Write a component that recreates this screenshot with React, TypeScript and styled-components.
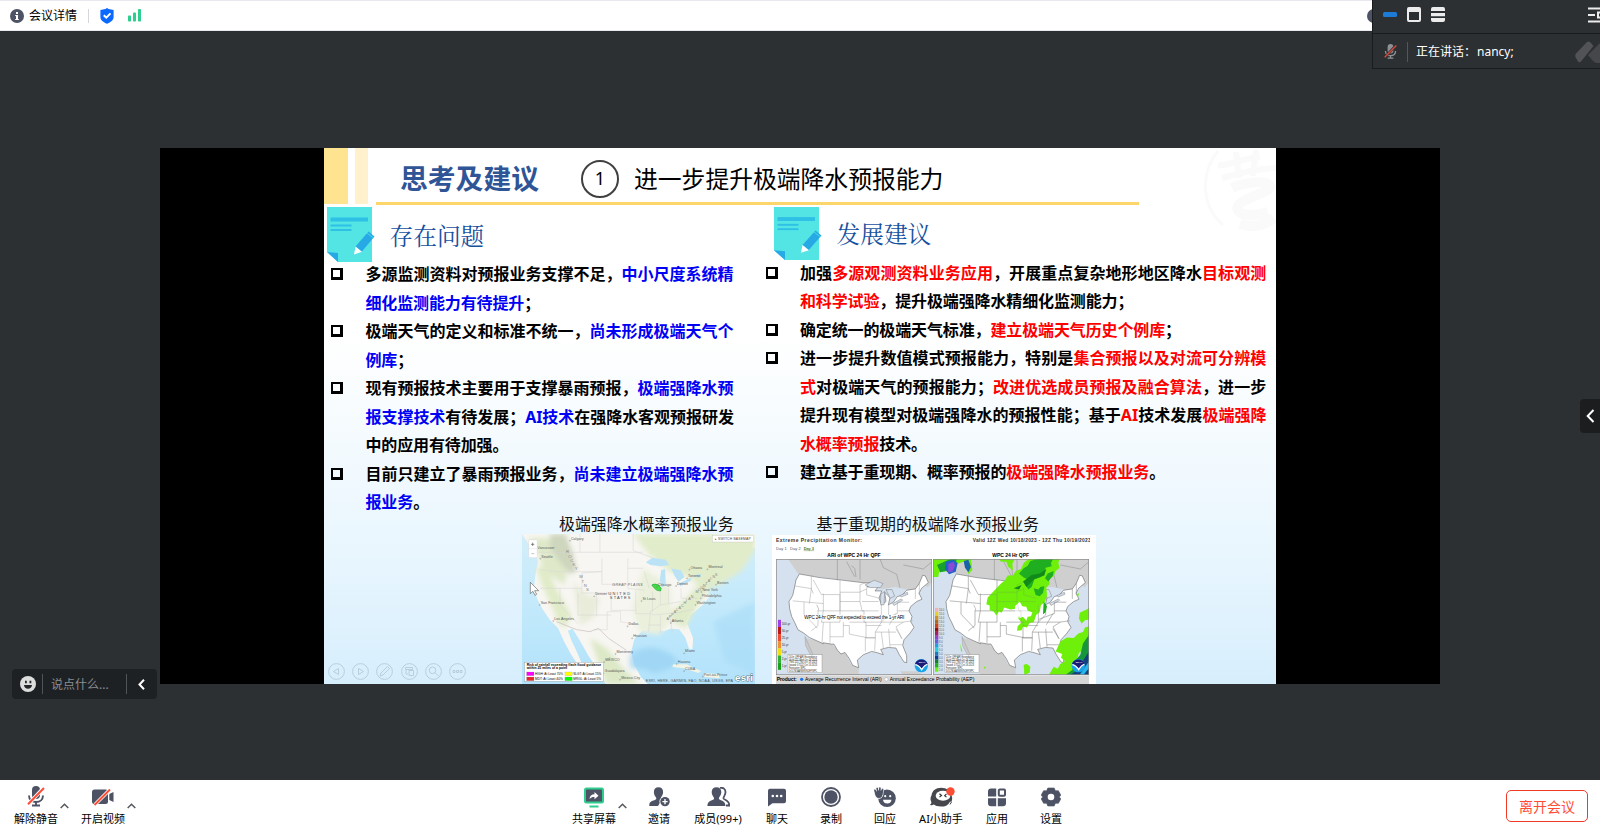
import React from 'react';
import styled, { createGlobalStyle } from 'styled-components';

const GlobalStyle = createGlobalStyle`
  * { box-sizing: border-box; }
  html, body { margin: 0; padding: 0; overflow: hidden; }
  body { font-family: "Noto Sans", "Noto Sans CJK SC", sans-serif; color: #000; }
  svg { display: block; flex: none; }
  svg text { font-family: "Liberation Sans", sans-serif; }
`;

const INK = '#4d5364';
const RED = '#ff4d35';

/* ---------- window frame ---------- */

const Window = styled.div`
  position: relative;
  width: 1600px;
  height: 832px;
  display: flex;
  flex-direction: column;
  background: #2d3033;
`;

const TopBar = styled.header`
  height: 31px;
  flex: none;
  display: flex;
  align-items: center;
  background: #fff;
  border-top: 1px solid #e8e9f0;
  border-bottom: 1px solid #e8e9f0;
  padding: 0 0 0 10px;
`;

const TopLabel = styled.span`
  font-size: 12px;
  line-height: 16px;
  margin-left: 5px;
  width: 48px;
  white-space: nowrap;
`;

const TopDivider = styled.i`
  width: 1px;
  height: 14px;
  background: #d4d6dc;
  margin: 0 11px 0 11px;
`;

const SignalSlot = styled.span`
  margin-left: 14px;
`;

const HiddenInfo = styled.span`
  margin-left: auto;
  margin-right: 219px;
`;

const Stage = styled.main`
  flex: 1;
  padding: 117px 160px 0;
`;

const Screen = styled.section`
  width: 1280px;
  height: 536px;
  background: #000;
  padding-left: 164px;
`;

/* ---------- floating speaker panel ---------- */

const SpeakerPanel = styled.aside`
  position: absolute;
  top: 0;
  right: 0;
  width: 228px;
  height: 69px;
  background: #2d3033;
  border-left: 1px solid #1a1b1d;
  border-bottom: 1px solid #1a1b1d;
  overflow: hidden;
`;

const PanelTools = styled.div`
  height: 34px;
  display: flex;
  align-items: center;
  gap: 10px;
  padding: 0 0 4px 10px;
  border-bottom: 1px solid #1a1b1d;
`;

const PanelMenu = styled.span`
  margin-left: auto;
`;

const PanelStatus = styled.div`
  height: 34px;
  display: flex;
  align-items: center;
  color: #fff;
  font-size: 12px;
  line-height: 16px;
  padding: 2px 0 0 11px;
`;

const PanelDivider = styled.i`
  width: 1px;
  height: 20px;
  background: #53565a;
  margin: 0 8px 0 10px;
`;

const SpeakerLabel = styled.span`
  width: 61px;
  white-space: nowrap;
`;

const SpeakerName = styled.span`
  font-size: 12px;
`;

const PanelLogo = styled.span`
  margin-left: auto;
`;

/* ---------- slide ---------- */

const Slide = styled.article`
  position: relative;
  width: 952px;
  height: 536px;
  overflow: hidden;
  display: flex;
  flex-direction: column;
  background: linear-gradient(#fff 0, #fff 35%, #f3fafe 56%, #e9f6fe 75%, #d7eefd 100%);
`;

const SlideHead = styled.div`
  height: 59px;
  flex: none;
  display: flex;
`;

const Stripe = styled.i<{ $w: number; $c: string; $gap: number }>`
  width: ${p => p.$w}px;
  height: 56px;
  background: ${p => p.$c};
  margin-right: ${p => p.$gap}px;
`;

const TitleArea = styled.div`
  width: 763px;
  height: 57px;
  display: flex;
  align-items: center;
  border-bottom: 3px solid #fdd66b;
  padding: 8px 0 0 24px;
  white-space: nowrap;
`;

const Title = styled.h1`
  margin: -2px 0 0;
  width: 181px;
  font-size: 27.8px;
  line-height: 36px;
  font-weight: 700;
  color: #2f5597;
`;

const Num = styled.span`
  width: 38px;
  height: 38px;
  border: 2px solid #404040;
  border-radius: 50%;
  font-size: 18px;
  line-height: 33px;
  text-align: center;
  margin-right: 15px;
`;

const Subtitle = styled.span`
  font-size: 23.8px;
  line-height: 32px;
`;

const Seal = styled.span`
  position: absolute;
  right: 0;
  top: 0;
`;

const Columns = styled.div`
  height: 308px;
  flex: none;
  display: flex;
`;

const Column = styled.section<{ $w: number }>`
  width: ${p => p.$w}px;
`;

const SectionHead = styled.div<{ $left: number; $h: number }>`
  display: flex;
  align-items: flex-start;
  height: ${p => p.$h}px;
  padding-left: ${p => p.$left}px;
  gap: 13.5px;
`;

const SectionTitle = styled.h2<{ $top: number }>`
  margin: ${p => p.$top}px 0 0;
  font-family: "Noto Serif CJK SC", "Noto Sans CJK SC", serif;
  font-weight: 400;
  font-size: 23.7px;
  line-height: 30px;
  color: #16519f;
`;

const List = styled.ul<{ $left: number; $gap: number }>`
  list-style: none;
  margin: 0;
  padding: 0 0 0 ${p => p.$left}px;
  li { display: flex; gap: ${p => p.$gap}px; }
`;

const Bullet = styled.i`
  width: 12px;
  height: 12px;
  border: solid #000;
  border-width: 2px 3px 3px 2px;
  margin-top: 8px;
  flex: none;
`;

const Lines = styled.p`
  margin: 0;
  font-size: 16px;
  line-height: 28.55px;
  font-weight: 700;
  white-space: nowrap;
`;

const Line = styled.span<{ $ls: number }>`
  display: block;
  letter-spacing: ${p => p.$ls}px;
`;

const Mark = styled.span<{ $c?: string }>`
  color: ${p => p.$c || '#000'};
`;

const Figures = styled.div`
  height: 169px;
  display: flex;
  align-items: flex-end;
`;

const Controls = styled.div`
  width: 198px;
  display: flex;
  gap: 7.4px;
  padding: 0 0 4px 3.5px;
`;

const Figure = styled.figure<{ $w: number; $gap: number }>`
  margin: 0 ${p => p.$gap}px 0 0;
  width: ${p => p.$w}px;
  height: 169px;
  display: flex;
  flex-direction: column;
  justify-content: flex-end;
`;

const Caption = styled.figcaption<{ $left: number }>`
  height: 20px;
  padding-left: ${p => p.$left}px;
  font-size: 15.9px;
  line-height: 18px;
  white-space: nowrap;
  color: #111;
`;

/* ---------- chat box and side handle ---------- */

const ChatBox = styled.div`
  position: absolute;
  left: 12px;
  top: 669px;
  width: 145px;
  height: 30px;
  border-radius: 4px;
  background: #1e2124;
  display: flex;
  align-items: center;
  padding-left: 8px;
  font-size: 12px;
  color: #8b8d90;
`;

const ChatText = styled.span`
  width: 75px;
  line-height: 16px;
  padding-top: 1px;
  white-space: nowrap;
`;

const ChatDivider = styled.i<{ $l: number; $r: number }>`
  width: 1px;
  height: 20px;
  background: #505357;
  margin: 0 ${p => p.$r}px 0 ${p => p.$l}px;
`;

const SideHandle = styled.div`
  position: absolute;
  right: 0;
  top: 399px;
  width: 20px;
  height: 34px;
  border-radius: 4px 0 0 4px;
  background: #1c1d1f;
  display: flex;
  align-items: center;
  padding-left: 5.5px;
`;

/* ---------- bottom toolbar ---------- */

const Toolbar = styled.footer`
  height: 52px;
  flex: none;
  background: #fff;
  display: flex;
  padding-left: 14px;
`;

const ToolGroup = styled.div<{ $w?: number }>`
  display: flex;
  width: ${p => (p.$w ? p.$w + 'px' : 'auto')};
`;

const Tool = styled.div<{ $w: number }>`
  width: ${p => p.$w}px;
  display: flex;
  flex-direction: column;
  align-items: center;
  padding-top: 5px;
  font-size: 11px;
  line-height: 16px;
  white-space: nowrap;
`;

const ToolIcon = styled.span`
  height: 24px;
  margin-bottom: 2px;
  display: flex;
  align-items: center;
`;

const Caret = styled.span<{ $r: number }>`
  width: 12px;
  margin-right: ${p => p.$r}px;
  padding: 22.5px 0 0 2px;
`;

const Leave = styled.button`
  margin: 10px 12px 0 auto;
  width: 82px;
  height: 32px;
  padding: 0;
  border: 1px solid #f03a28;
  border-radius: 5px;
  background: #fff;
  color: ${RED};
  font: 14px/28px "Noto Sans CJK SC", sans-serif;
`;

/* ---------- icons ---------- */

const Info = () => (
  <svg width="14" height="14" viewBox="0 0 14 14">
    <circle cx="7" cy="7" r="7" fill={INK} />
    <path d="M6 3h2v2H6zM5.2 6H8v4h.8v1H5.2v-1H6V7h-.8z" fill="#fff" />
  </svg>
);

const Shield = () => (
  <svg width="14" height="16" viewBox="0 0 14 16">
    <path d="M7 0l1.600 1 5 .9v7.200c0 3.300-3 5.300-6.600 6.700C3.400 14.400.4 12.400.4 9.100V1.900l5-.9z" fill="#0b69ff" />
    <path d="M3.800 7.200l2.500 2.500 4.200-4.300" fill="none" stroke="#fff" strokeWidth="2" />
  </svg>
);

const Signal = () => (
  <svg width="13" height="13" viewBox="0 0 13 13" fill="#2ccf8e">
    <rect x="0" y="6.500" width="3" height="6" rx=".8" />
    <rect x="5" y="3.500" width="3" height="9" rx=".8" />
    <rect x="10" y="0" width="3" height="12.500" rx=".8" />
  </svg>
);

const Mic = ({ s = 18, body = INK, gap = '#fff', slash = RED }) => (
  <svg width={s} height={s * 1.17} viewBox="0 0 18 21">
    <rect x="5" y="0" width="8" height="13" rx="4" fill={body} />
    <path d="M2 9.500c0 4 3 6.500 7 6.500s7-2.500 7-6.500" fill="none" stroke={body} strokeWidth="1.900" />
    <path d="M9 16v3M5 19.500h8" stroke={body} strokeWidth="1.900" />
    <path d="M1.500 18L16.500 2" stroke={gap} strokeWidth="3.600" />
    <path d="M1 18.300L17 2" stroke={slash} strokeWidth="2" />
  </svg>
);

const Camera = () => (
  <svg width="22" height="18" viewBox="0 0 22 18">
    <rect x="0" y="1.500" width="16" height="14.500" rx="2.500" fill={INK} />
    <path d="M17.300 6l4.200-2v10l-4.200-2z" fill={INK} />
    <path d="M3 16.500L18 1.500" stroke="#fff" strokeWidth="3.600" />
    <path d="M2.500 17L18 1.500" stroke={RED} strokeWidth="2" />
  </svg>
);

const Up = () => (
  <svg width="9" height="6" viewBox="0 0 9 6">
    <path d="M.7 5l3.800-3.800L8.300 5" fill="none" stroke="#55585f" strokeWidth="1.500" />
  </svg>
);

const Left = () => (
  <svg width="9" height="14" viewBox="0 0 9 14">
    <path d="M7.500 1L1.700 7l5.800 6" fill="none" stroke="#fff" strokeWidth="2" />
  </svg>
);

const Share = () => (
  <svg width="20" height="21" viewBox="0 0 20 21">
    <rect x="1" y="1.500" width="18" height="14" rx="1.500" fill={INK} stroke="#2ccf8e" strokeWidth="2" />
    <path d="M5.500 12c.3-3 2-4.600 5-4.700V5l4 3.700-4 3.500V9.900c-2.200-.1-3.600.5-5 2.100z" fill="#fff" />
    <path d="M5.500 19.500h9" stroke="#2ccf8e" strokeWidth="2" />
  </svg>
);

const Invite = () => (
  <svg width="21" height="20" viewBox="0 0 21 20">
    <path d="M9.500.3c3 0 4.600 2 4.600 4.800 0 2-.8 3.800-1.900 4.800-.6 1 .2 1.500 1.200 2L9 19H.4c-.5-2.500.6-4 2.600-5 2-1 4.400-1.400 4.400-2.600 0-1-2.500-2.500-2.500-6.300C4.900 2.300 6.500.3 9.500.3z" fill={INK} />
    <circle cx="16" cy="14.600" r="5.600" fill="#fff" />
    <circle cx="16" cy="14.600" r="4.700" fill={INK} />
    <path d="M16 12v5.200M13.400 14.600h5.200" stroke="#fff" strokeWidth="1.400" />
  </svg>
);

const Members = () => (
  <svg width="23" height="20" viewBox="0 0 23 20">
    <path d="M13 .9c3.300-.6 5.500 1.200 5.500 4.200 0 3.500-2.300 4.800-2 6.300.4 1.600 6 1.500 5.700 7.100H19" fill="none" stroke={INK} strokeWidth="1.800" />
    <path d="M9.500.3c3 0 4.800 2 4.800 4.800 0 3.700-2.400 5-2.400 6.500 0 2 6.800 1.600 6.500 7.400H.4C.2 13.200 7.100 13.600 7.100 11.600c0-1.500-2.400-2.800-2.400-6.500C4.700 2.300 6.500.3 9.500.3z" fill={INK} />
  </svg>
);

const Chat = () => (
  <svg width="18" height="19" viewBox="0 0 18 19">
    <path d="M2 .8h14a2 2 0 012 2v10.400a2 2 0 01-2 2H4.500L0 18.500V2.800a2 2 0 012-2z" fill={INK} />
    <g fill="#fff"><circle cx="4.800" cy="8" r="1.300" /><circle cx="9" cy="8" r="1.300" /><circle cx="13.200" cy="8" r="1.300" /></g>
  </svg>
);

const RecordIcon = () => (
  <svg width="20" height="20" viewBox="0 0 20 20">
    <circle cx="10" cy="10" r="9" fill="none" stroke={INK} strokeWidth="1.800" />
    <circle cx="10" cy="10" r="6.700" fill={INK} />
  </svg>
);

const Respond = () => (
  <svg width="22" height="21" viewBox="0 0 22 21">
    <circle cx="13" cy="11.300" r="8.800" fill={INK} />
    <circle cx="11.200" cy="9.200" r="1.100" fill="#fff" /><circle cx="16.200" cy="9.200" r="1.100" fill="#fff" />
    <path d="M9 12.700h8.500c-.4 2.700-2 3.800-4.200 3.800S9.300 15.400 9 12.700z" fill="#fff" />
    <path d="M.3 2.800l1.500-.6.5 2L2.300.7 4 .3l.6 3L5 0h1.700l.1 3.500L8 1.200l1.500.6-.6 5.700c-.3 2.500-1.800 4-4 4C1.500 11.500.6 8 .3 2.800z" fill={INK} stroke="#fff" strokeWidth=".8" />
    <path d="M.9 3.200l1.500 5M3.200 1.500l.8 5M5.900 1.200l-.2 5M8.600 2.400l-1 5" stroke={INK} strokeWidth="1.500" strokeLinecap="round" />
  </svg>
);

const Robot = () => (
  <svg width="27" height="21" viewBox="0 0 27 21">
    <path d="M13 .8c5.800 0 9.600 3 9.800 7 1.500 1 1.800 4 .8 7-1 .3-1.500-.4-1.500-.4-1.500 3.600-4.600 5.200-9.200 5.200-3.200 0-5.600-.7-7.200-2-1.800 1-3.600.4-3.700-.2 1.300-.6 1.500-1.500 1.300-2.500C2 12 2.500 10 3.500 8.500 4.200 3.600 8 .8 13 .8z" fill="#46474d" />
    <ellipse cx="15" cy="8.700" rx="7.300" ry="5" fill="#fff" />
    <path d="M11.500 6.800l2 1.700-2 1.600M18.500 6.800l-1.800 1.800 1.800 1.500" fill="none" stroke="#333" strokeWidth="1.200" />
    <path d="M23.500 15l-1.500 2.500" stroke="#46474d" strokeWidth="1" />
    <circle cx="22.500" cy="4.500" r="4.200" fill={RED} />
  </svg>
);

const Apps = () => (
  <svg width="18" height="19" viewBox="0 0 18 19">
    <g fill={INK}>
      <path d="M3 .5h5.200v8H0v-5a3 3 0 013-3zM0 10.300h8.200v8H3a3 3 0 01-3-3zM9.800 10.300H18v5a3 3 0 01-3 3H9.800z" />
      <rect x="10.800" y="1.500" width="6.200" height="6.200" rx="1" fill="none" stroke={INK} strokeWidth="2" />
    </g>
  </svg>
);

const Gear = () => (
  <svg width="20" height="20" viewBox="0 0 20 20">
    <path d="M6.800 1h6.400l1.200 2.800 3-.1 2.500 4.600-1.700 1.700 1.700 1.700-2.500 4.600-3-.1L13.200 19H6.800l-1.200-2.800-3 .1L.1 11.700 1.800 10 .1 8.300l2.500-4.600 3 .1z" fill={INK} stroke={INK} strokeLinejoin="round" strokeWidth=".6" />
    <circle cx="10" cy="10" r="3.300" fill="#fff" />
  </svg>
);

const Smile = () => (
  <svg width="16" height="16" viewBox="0 0 16 16">
    <circle cx="8" cy="8" r="8" fill="#dcdddd" />
    <path d="M5 4.800h1.800v2.500H5zM9.500 4.800h1.800v2.500H9.500zM4 9h8c-.3 2.500-1.700 3.700-4 3.700S4.300 11.500 4 9z" fill="#24272a" />
  </svg>
);

const NoteIcon = ({ h }: { h: number }) => (
  <svg width="49" height={h} viewBox="0 0 49 55" preserveAspectRatio="none">
    <path d="M0 0h45v55H11L0 45z" fill="#52e5e4" />
    <path d="M0 45l11 1v9z" fill="#27a9e6" />
    <rect x="3.500" y="10.500" width="37.500" height="4" fill="#2fc0e6" />
    <rect x="3.500" y="17.500" width="21" height="2" fill="#2fc0e6" />
    <rect x="3.500" y="22" width="21" height="2" fill="#2fc0e6" />
    <path d="M28.500 39.500L41.500 24.500l6 5L34.500 45z" fill="#27a9e6" />
    <path d="M40 26l6.500 5" stroke="#52e5e4" strokeWidth=".8" />
    <path d="M28.500 39.500l6.500 5.300L27 47.500z" fill="#fff" />
  </svg>
);

const SealMark = () => (
  <svg width="72" height="90" viewBox="0 0 72 90" fill="none" stroke="#fafafa">
    <path d="M14 3C-4 25-3 58 19 77" strokeWidth="3" />
    <path d="M14 17c10 2 18-6 42-8M18 30c14-3 22-8 54-10M32 4l3 26M52 2l-3 26" strokeWidth="6" />
    <path d="M28 40c12-6 36-8 38-2S38 50 34 58s12 12 30 6M36 76c12 4 24 2 34-6" strokeWidth="10" />
  </svg>
);

const controlGlyphs = [
  <path key="a" d="M10.500 5.500v6L5.500 8.500z" />,
  <path key="b" d="M6.500 5.500v6l5-3z" />,
  <path key="c" d="M4 13l1-3 6.500-6.500 2 2L7 12z" />,
  <path key="d" d="M4.500 4.500h7v2h-7zM5 7v4h2M8 7.500h4.500v5H8z" />,
  <path key="e" d="M7.500 4a3.300 3.300 0 100 6.600A3.300 3.300 0 007.500 4zM10 9.500l3.500 3.500" />,
  <path key="f" d="M4 7.500h2v2H4zM7.500 7.500h2v2h-2zM11 7.500h2v2h-2z" />,
];

/* ---------- maps ---------- */

const cities: [string, number, number][] = [
  ['Calgary', 213, 104], ['Vancouver', 112, 132], ['Seattle', 124, 158], ['San Francisco', 122, 297],
  ['Los Angeles', 163, 345], ['Denver', 286, 271], ['Dallas', 386, 361], ['Houston', 400, 397],
  ['Monterrey', 350, 444], ['St Louis', 428, 285], ['Chicago', 474, 243], ['Detroit', 532, 240],
  ['Toronto', 565, 217], ['Ottawa', 572, 191], ['Montreal', 626, 190], ['Boston', 652, 236],
  ['New York', 608, 258], ['Philadelphia', 606, 277], ['Washington', 590, 297], ['Atlanta', 516, 351],
  ['Miami', 556, 442], ['Havana', 534, 474], ['MÉXICO', 316, 468], ['Mexico City', 364, 521],
  ['CUBA', 556, 495], ['Guadalajara', 314, 502], ['Port-au-Prince', 612, 512],
];

const spacedLetters = (text: string, pts: number[][], size: number) =>
  text.split('').map((c, i) => (
    <text key={i} x={pts[0][0] + ((pts[1][0] - pts[0][0]) * i) / (text.length - 1)} y={pts[0][1] + ((pts[1][1] - pts[0][1]) * i) / (text.length - 1)} fontSize={size} fill="#858585">{c}</text>
  ));

const legend: [string, string, number, number][] = [
  ['#ff00ff', 'HIGH: At Least 70%', 80, 501], ['#ffff00', 'SLGT: At Least 15%', 195, 501],
  ['#e8252b', 'MDT: At Least 40%', 80, 516], ['#00ff00', 'MRGL: At Least 5%', 195, 516],
];

const BaseMap = () => (
  <svg width="233" height="150" viewBox="66 87 700 450" preserveAspectRatio="none">
    <defs>
      <linearGradient id="sea" x1="0" y1="0" x2="0" y2="1">
        <stop offset="0" stopColor="#d3eefa" /><stop offset=".6" stopColor="#bfe8fb" /><stop offset="1" stopColor="#b2e2fb" />
      </linearGradient>
      <filter id="soft"><feGaussianBlur stdDeviation="8" /></filter>
    </defs>
    <rect x="66" y="87" width="700" height="450" fill="url(#sea)" />
    <path d="M66 87l20 30 22 24 6 30-8 40-4 38 10 34 16 30 22 32 24 24 18 40 22 40 24 36 10-4-18-42-16-34-10-28 14-6 22 36 26 46 28 40 24 44h126l-20-20-20-36-10-40 10-40 24-24 40-8 24 10 20-8 26 2 18 24 12 34 10 2 2-34-18-44 10-24 40-34 16-20-4-30 26-36 30-26 22-18 14-10 40-26 34-10 24-30-6-20-30 14-20-4 40-30 24-26V87z" fill="#f7f6f2" />
    <g filter="url(#soft)">
      <path d="M400 87h366v50l-40 60-60 40-50 20-50-40-60-20-60-50z" fill="#e1ecca" />
      <path d="M84 100h60l50 20 10 60-10 60-60-40-22-60z" fill="#dfe9c9" />
      <path d="M150 87h46l20 50 14 60-20 10-34-40-26-40z" fill="#ced6bd" />
      <path d="M108 190l22 60 24 50 20 50 20 20 20-40-50-90-30-60z" fill="#e0ebc8" />
      <path d="M220 230l40 40 40 10-20 60-40 20z" fill="#e8ecd9" />
      <path d="M498 340l60-60 70-76 20 20-60 86-30 60z" fill="#dfebc9" />
      <path d="M430 190l80 50 8 100-40 50-60-10-20-70z" fill="#eaf0db" />
      <path d="M270 400l50 30 50 60 50 47h-100z" fill="#dce8c6" />
    </g>
    <path d="M438 172l20-14 40 6 10 16-26 4-30-4zM484 196l12-4 2 48-12 8-6-22zM514 190l30 6 10 20-18 14-12-18zM536 236l26-12 14-8-4 12-30 16zM580 212l26-6-10 12z" fill="#bce3f5" />
    <path d="M390 450q50-40 110-10t10 50-60 10-60-10z" fill="#98d2f2" opacity=".7" filter="url(#soft)" />
    <path d="M640 350l126-60v220l-90-40z" fill="#a8dcf8" opacity=".6" filter="url(#soft)" />
    <path d="M520 478l40 0 44 20-8 6-44-14-34-4zM612 504l44 4 4 12-46-4z" fill="#f2f3e4" />
    <g fill="none" stroke="#d9d5d6" strokeWidth="1.600">
      <path d="M112 142h318M218 142v58l-40 0-60-6M218 200l88 0M306 160v78M306 200l-60 4v60h90M306 238h78M120 250h126M180 250v50l54 56M234 264v66h100M290 264v70M334 264v52h74M322 320v54h-40M322 320h40v30l44 8M384 160v90l50 6M384 190h46M408 256v70h50M434 200l14 50M458 260v60M482 250v50l-30 20-6 60M506 250v44M482 300l60-10M456 330l90-8M446 360h36M482 330v56M510 330l8 54M544 250v30l50 0M544 320l40-6M240 87v55M300 87v55M400 87v50l60 22" />
      <path d="M170 350l60 24 40 6 26-10 30 30 24 16 30 20" stroke="#c3bcc0" strokeWidth="2" />
    </g>
    <path d="M456 240q8-6 20 0l8 10-2 8q-12 0-18-8z" fill="#3fe03f" stroke="#21a038" strokeWidth="2" />
    <g fill="#5a5a5a" fontSize="11">
      {cities.map(([n, x, y]) => <text key={n} x={x} y={y}>{n}</text>)}
      {cities.map(([n, x, y]) => <circle key={n} cx={x - 3} cy={y + 3} r="1.800" fill="none" stroke="#777" />)}
    </g>
    <text x="337" y="242" fontSize="11" fill="#6b6b6b" textLength="92" fontStyle="italic">GREAT PLAINS</text>
    <text x="325" y="269" fontSize="12" fill="#444" textLength="66">UNITED</text>
    <text x="330" y="283" fontSize="12" fill="#444" textLength="62">STATES</text>
    {spacedLetters('ROCKY MTNS', [[198, 145], [258, 258]], 13)}
    {spacedLetters('APPALACHIAN MOUNTAINS', [[500, 345], [646, 212]], 11)}
    <rect x="86" y="104" width="26" height="54" rx="3" fill="#fff" stroke="#c8c8c8" />
    <path d="M86 131h26" stroke="#ccc" />
    <path d="M93 118h10M98 113v10" stroke="#555" strokeWidth="2" />
    <path d="M94 146h9" stroke="#aaa" strokeWidth="2" />
    <rect x="638" y="91" width="124" height="20" fill="#fff" stroke="#bbb" />
    <text x="645" y="105" fontSize="10" fill="#444" textLength="108">▸ SWITCH BASEMAP</text>
    <rect x="74" y="472" width="237" height="57" fill="#fff" stroke="#888" />
    <text x="80" y="482" fontSize="10" fontWeight="bold" textLength="224" lengthAdjust="spacingAndGlyphs">Risk of rainfall exceeding flash flood guidance</text>
    <text x="80" y="493" fontSize="10" fontWeight="bold" textLength="122" lengthAdjust="spacingAndGlyphs">within 25 miles of a point</text>
    {legend.map(([c, t, x, y]) => (
      <g key={c}>
        <rect x={x} y={y} width="22" height="11" fill={c} stroke="#777" strokeWidth=".6" />
        <text x={x + 25} y={y + 9} fontSize="9" textLength="84" lengthAdjust="spacingAndGlyphs">{t}</text>
      </g>
    ))}
    <text x="438" y="530" fontSize="11" fill="#555" textLength="262">ESRI, HERE, GARMIN, FAO, NOAA, USGS, EPA</text>
    <text x="706" y="529" fontSize="29" fontWeight="bold" fill="#fff" stroke="#5f7f8c" strokeWidth="3" paintOrder="stroke" textLength="54">esri</text>
    <path d="M91 232l0 34 8-7 6 12 5-3-6-11h12z" fill="#fff" stroke="#444" strokeWidth="1.600" />
  </svg>
);

const US_OUTLINE = 'M118 207L108 225 103 250 98 272 87 290 89 312 95 335 105 355 114 375 130 384 148 398 190 417 190 414 214 418 222 418 232 436 243 448 255 443 268 462 278 482 296 489 292 466 310 450 335 440 352 444 370 450 362 434 385 428 408 430 418 450 432 472 440 474 440 452 428 422 432 405 450 385 462 368 452 350 456 335 447 318 452 305 470 290 486 283 477 265 485 250 505 233 496 213 488 211 478 235 466 252 440 256 425 272 412 275 400 292 385 300 390 278 374 262 378 290 365 300 357 280 365 258 345 258 355 245 320 246 342 233 315 234 250 226 180 218Z';
const STATES = 'M104 243l50 8M154 212v40l6 14M98 288l92 8M154 251l-6 45M160 225l24 44h54M190 266v52h50v-52M240 225v66M240 262h58M240 290h60M132 292v36l40 42M190 318l-16 0v44l-20 16M190 318l-6 34h56M240 318v34M240 318h72M240 290v28M210 352v62M250 352v44h-40M190 352l-4 62M250 362h18v26l50 10M318 232l-18 8v50l6 28h50M298 262l22-10M306 290h50M320 250v20l38 10M312 318v34h52M268 352h50M318 352v48h28M318 362h46M364 300v52l-18 30v16l-2 40M346 382h18l6 48M364 382h44M364 352h64M386 300v30l-22 22M412 292v34l-48 18M412 318h36M408 326l-20 34M386 372l4 54M408 372l18 30M430 352l-22 14 18 36M390 420h36M448 292l-36 0M466 252v30M478 235l0 34M428 352l30-4M346 398l-30 0v42';
const CANADA = 'M48 162h468v70l-12 14-16-6-22 20-60-14-40 6-30-14-30-6-188-24-20-46z';
const LAKES = 'M315 240l28-14 26 10-8 12-30 0zM362 268l12-8-2 40-10 0zM378 254l18 0 8 20-14 6zM398 296l26-14 4 4-26 16zM420 272l22-10 2 6-20 8z';

const WpcMap = ({ children }: { children?: React.ReactNode }) => (
  <svg width="156" height="116" viewBox="48 162 468 349" preserveAspectRatio="none">
    <rect x="48" y="162" width="468" height="349" fill="#d5e1ee" />
    <path d={CANADA} fill="#cfcfcf" />
    <path d="M84 162l30 44 8-6-20-38z" fill="#cfcfcf" />
    <path d="M134 400l80 16 18 18 26 14 14 30 20 10-4 23H190l-20-40z" fill="#cfcfcf" />
    <path d="M135 395l22 50 16 34-10-6-26-50z" fill="#c9c9c9" stroke="#888" />
    <path d="M286 510v-34l10 10 0 25zM420 500h50l20 11h-60z" fill="#cfcfcf" />
    <path d={US_OUTLINE} fill="#fff" stroke="#666" strokeWidth="1.800" strokeLinejoin="round" />
    <path d={LAKES} fill="#d5e1ee" stroke="#666" strokeWidth="1.200" />
    <path d={STATES} fill="none" stroke="#999" strokeWidth="1.400" />
    <path d="M170 300l6 12-2 6M260 170l24 45M232 162v64M300 162v62M360 162l10 26 40 20 10 40M430 180l60 12 24-20M274 182l10 8 4 26" fill="none" stroke="#888" strokeWidth="1.500" />
    {children}
    <rect x="84" y="450" width="102" height="54" fill="#fff" stroke="#777" />
    {['24-hr QPF ARI Exceedance', 'Valid 12Z Wed Oct 18 2023', 'Thru 12Z Thu Oct 19 2023', 'Issued: 0752Z Oct 16 2023', 'Forecaster: WPC', 'DOC/NOAA/NWS/NCEP/WPC'].map((t, i) => (
      <text key={t} x="87" y={459 + i * 8.5} fontSize="8" fill="#222" textLength={i === 4 ? 50 : 84} lengthAdjust="spacingAndGlyphs">{t}</text>
    ))}
    <circle cx="484" cy="483" r="20" fill="#1aa3e8" />
    <path d="M465 478a20 20 0 0138 0c-6 2-12 10-17 16-6-8-12-14-21-16z" fill="#1b1c78" />
    <path d="M466 480c8 1 14 8 19 15 5-8 9-14 17-16" fill="none" stroke="#fff" strokeWidth="4" />
    <text x="476" y="474" fontSize="7" fontWeight="bold" fill="#fff">NOAA</text>
    <rect x="49" y="163" width="466" height="347" fill="none" stroke="#888" strokeWidth="2" />
  </svg>
);

const ARI_COLORS = ['#a040e8', '#c01818', '#ee4a30', '#f09030', '#f0e010', '#30b030', '#18a018'];
const ARI_TICKS = ['100-yr', '50-yr', '25-yr', '10-yr', '5-yr', '2-yr', '1-yr'];
const QPF_COLORS = ['#f8b0b8', '#e8d020', '#d09020', '#b06820', '#d04010', '#901010', '#a02060', '#9040d0', '#6060e0', '#20a0e0', '#20d0e0', '#1878c0', '#103c90', '#108030', '#20b020', '#70f010'];

const WpcWrap = styled.div`
  width: 324px;
  height: 149px;
  background: #fff;
  padding: 0 6px 0 4px;
  display: flex;
  flex-direction: column;
`;

const MapPair = styled.div`
  display: flex;
  gap: 1px;
`;

const WpcFigure = () => (
  <WpcWrap>
    <svg width="314" height="24" viewBox="48 90 942 72">
      <text x="48" y="110" fontSize="15" fontWeight="bold" fill="#333" textLength="258">Extreme Precipitation Monitor:</text>
      <text x="638" y="110" fontSize="14.500" fontWeight="bold" fill="#333" textLength="354">Valid 12Z Wed 10/18/2023 - 12Z Thu 10/19/2023</text>
      <text x="48" y="134" fontSize="12" fill="#555" textLength="32">Day 1</text>
      <text x="90" y="134" fontSize="12" fill="#555" textLength="32">Day 2</text>
      <text x="131" y="134" fontSize="12" fontWeight="bold" fill="#5b7a22" textDecoration="underline" textLength="31">Day 3</text>
      <text x="202" y="157" fontSize="15" fontWeight="bold" textLength="160">ARI of WPC 24 Hr QPF</text>
      <text x="697" y="157" fontSize="15" fontWeight="bold" textLength="110">WPC 24 Hr QPF</text>
    </svg>
    <MapPair>
      <WpcMap>
        <rect x="133" y="330" width="300" height="14" fill="#fff" />
        <text x="133" y="342" fontSize="14" textLength="300">WPC 24-hr QPF not expected to exceed the 1-yr ARI</text>
        {ARI_COLORS.map((c, i) => <rect key={c} x="54" y={345 + i * 21.5} width="9" height="21.500" fill={c} />)}
        {ARI_TICKS.map((t, i) => <text key={t} x="65" y={360 + i * 21} fontSize="9" fill="#333">{t}</text>)}
      </WpcMap>
      <WpcMap>
        <path d="M48 162h114l4 32-12 14-8-40-30 10-16 20-34 4-2 14H48z" fill="#6ef00a" />
        <path d="M60 180l40-18h20l-10 30-40 10z" fill="#18a030" />
        <path d="M86 170l22-6 14 10-6 26-20 8-12-16z" fill="#2060c8" />
        <path d="M94 176l16-6 4 12-8 18-12 2z" fill="#8a4ad8" />
        <path d="M140 168l14-4 8 22-8 16-10-14z" fill="#1b62a8" />
        <path d="M246 162l46 2-6 12 2 20-14-10-6-16-16 0z" fill="#6ef00a" />
        <path d="M252 236l12-10 8-14 16 0 8-14 16-6 8-18 14-12h94l-4 12 4 14-12 10-6 16-14 8 2 16-10 10 2 24-6 20-12 8-4 22-10 8-8 22-12 2-8 14-12-2-4 10-14 2 2-14 12-12-10-10 4-18-12-12-16 2-18-6-8 16-8-4-8 12-8-12-12-4 0-14-10-4 4-20z" fill="#6ef00a" />
        <path d="M306 206l14-16 12-8 8-14 22-6h46l-6 12 2 10-18 4-4 16-10 12-20 8-8 22-10 8-6-10 2-22-10-4z" fill="#1fae1f" />
        <path d="M350 250l14 4 6-8 12-2-4 20-10 10-12-4zM384 220l8-14 18-8-2 14-14 18zM380 290l10 14-4 18-8 6z" fill="#1fae1f" />
        <path d="M318 230l26-20 24-4 20-14-6 20-30 10-24 24zM290 250l24-10-8 14z" fill="#118a1a" />
        <path d="M478 270l8-6-2 10zM488 324l16-8 12-6v34l-12 2-10 10-8-14z" fill="#6ef00a" />
        <path d="M430 410l20-12 20 2 14-14 14-4 6-14 12-4v60l-30 20-8 26 8 40h-90l14-24 12 6 8-14 14-8-12-12 4-10-20-8z" fill="#6ef00a" />
        <path d="M320 480l10-2 10 8-2 18-16 6zM200 486l6 0-2 8zM130 416l6 24-4 0z" fill="#6ef00a" />
        <path d="M516 390v120h-70l20-14 10-30 14-16 8-34z" fill="#16983a" />
        <path d="M516 440v70h-56l26-16 14-30z" fill="#14427f" />
        <path d="M516 470v20l-16 20h-12z" fill="#2bb4ea" />
        <path d="M294 304l14-14 8 14 12 2 4 12 14 4-4 12-10 2-4 12-10-12-10 4-4-14-10 4z" fill="#fff" />
        <path d={STATES} fill="none" stroke="#777" strokeOpacity=".5" strokeWidth="1.200" />
        {QPF_COLORS.map((c, i) => <rect key={c} x="54" y={309 + i * 12} width="10" height="12" fill={c} />)}
        {QPF_COLORS.map((c, i) => <text key={c} x="66" y={319 + i * 12} fontSize="8" fill="#555">{(16 - i) + '.0'}</text>)}
      </WpcMap>
    </MapPair>
    <svg width="313" height="9" viewBox="48 513 939 27">
      <rect x="48" y="514" width="939" height="26" fill="#d6d6d6" />
      <text x="50" y="532" fontSize="15" fontWeight="bold" textLength="60">Product:</text>
      <circle cx="125" cy="526" r="5" fill="#1a73e8" />
      <text x="135" y="532" fontSize="15" textLength="230">Average Recurrence Interval (ARI)</text>
      <circle cx="379" cy="526" r="5" fill="#fff" stroke="#999" />
      <text x="389" y="532" fontSize="15" textLength="254">Annual Exceedance Probability (AEP)</text>
    </svg>
  </WpcWrap>
);

/* ---------- slide content: '*' fences emphasised runs ---------- */

const problems = [
  ['多源监测资料对预报业务支撑不足，*中小尺度系统精*', '*细化监测能力有待提升*；'],
  ['极端天气的定义和标准不统一，*尚未形成极端天气个*', '*例库*；'],
  ['现有预报技术主要用于支撑暴雨预报，*极端强降水预*', '*报支撑技术*有待发展；*AI技术*在强降水客观预报研发', '中的应用有待加强。'],
  ['目前只建立了暴雨预报业务，*尚未建立极端强降水预*', '*报业务*。'],
];

const advice = [
  ['加强*多源观测资料业务应用*，开展重点复杂地形地区降水*目标观测*', '*和科学试验*，提升极端强降水精细化监测能力；'],
  ['确定统一的极端天气标准，*建立极端天气历史个例库*；'],
  ['进一步提升数值模式预报能力，特别是*集合预报以及对流可分辨模*', '*式*对极端天气的预报能力；*改进优选成员预报及融合算法*，进一步', '提升现有模型对极端强降水的预报性能；基于*AI*技术发展*极端强降*', '*水概率预报*技术。'],
  ['建立基于重现期、概率预报的*极端强降水预报业务*。'],
];

const spacing = (line: string, last: boolean, full: number) => {
  if (last) return -0.13;
  return line.includes('AI') ? full - 0.04 : full;
};

const Points = ({ items, color, left, gap, ls }: { items: string[][]; color: string; left: number; gap: number; ls: number }) => (
  <List $left={left} $gap={gap}>
    {items.map(lines => (
      <li key={lines[0]}>
        <Bullet />
        <Lines>
          {lines.map((line, i) => (
            <Line key={i} $ls={spacing(line, i === lines.length - 1, ls)}>
              {line.split('*').map((run, j) => run && <Mark key={j} $c={j % 2 ? color : undefined}>{run}</Mark>)}
            </Line>
          ))}
        </Lines>
      </li>
    ))}
  </List>
);

const tools: [string, number, () => React.ReactElement][] = [
  ['邀请', 54, Invite], ['成员(99+)', 64, Members], ['聊天', 54, Chat], ['录制', 54, RecordIcon],
  ['回应', 54, Respond], ['AI小助手', 58, Robot], ['应用', 54, Apps], ['设置', 54, Gear],
];

const ToolButton = ({ label, w, icon }: { label: string; w: number; icon: React.ReactNode }) => (
  <Tool $w={w}><ToolIcon>{icon}</ToolIcon>{label}</Tool>
);

export default function App() {
  return (
    <Window>
      <GlobalStyle />
      <TopBar>
        <Info />
        <TopLabel>会议详情</TopLabel>
        <TopDivider />
        <Shield />
        <SignalSlot><Signal /></SignalSlot>
        <HiddenInfo><Info /></HiddenInfo>
      </TopBar>

      <Stage>
        <Screen>
          <Slide>
            <Seal><SealMark /></Seal>
            <SlideHead>
              <Stripe $w={24} $c="#fee391" $gap={7} />
              <Stripe $w={13} $c="#fff1cb" $gap={8} />
              <TitleArea>
                <Title>思考及建议</Title>
                <Num>1</Num>
                <Subtitle>进一步提升极端降水预报能力</Subtitle>
              </TitleArea>
            </SlideHead>
            <Columns>
              <Column $w={434}>
                <SectionHead $left={3} $h={53}>
                  <NoteIcon h={55} />
                  <SectionTitle $top={13}>存在问题</SectionTitle>
                </SectionHead>
                <Points items={problems} color="#0000f5" left={7} gap={22.5} ls={0} />
              </Column>
              <Column $w={518}>
                <SectionHead $left={16} $h={51.5}>
                  <NoteIcon h={53} />
                  <SectionTitle $top={11}>发展建议</SectionTitle>
                </SectionHead>
                <Points items={advice} color="#fe0000" left={8} gap={22} ls={0.08} />
              </Column>
            </Columns>
            <Figures>
              <Controls>
                {controlGlyphs.map((g, i) => (
                  <svg key={i} width="17" height="17" viewBox="0 0 17 17" fill="none" stroke="#b9cedb" strokeWidth="1">
                    <circle cx="8.500" cy="8.500" r="7.900" />
                    {g}
                  </svg>
                ))}
              </Controls>
              <Figure $w={233} $gap={16.5}>
                <Caption $left={37}>极端强降水概率预报业务</Caption>
                <BaseMap />
              </Figure>
              <Figure $w={324} $gap={0}>
                <Caption $left={45}>基于重现期的极端降水预报业务</Caption>
                <WpcFigure />
              </Figure>
            </Figures>
          </Slide>
        </Screen>
      </Stage>

      <Toolbar>
        <ToolGroup $w={558}>
          <ToolButton label="解除静音" w={44} icon={<Mic />} />
          <Caret $r={11}><Up /></Caret>
          <ToolButton label="开启视频" w={44} icon={<Camera />} />
          <Caret $r={0}><Up /></Caret>
        </ToolGroup>
        <ToolGroup>
          <ToolButton label="共享屏幕" w={44} icon={<Share />} />
          <Caret $r={4}><Up /></Caret>
          {tools.map(([label, w, Icon]) => <ToolButton key={label} label={label} w={w} icon={<Icon />} />)}
        </ToolGroup>
        <Leave>离开会议</Leave>
      </Toolbar>

      <SpeakerPanel>
        <PanelTools>
          <svg width="14" height="15" viewBox="0 0 14 15"><rect y="5" width="14" height="5" rx="1.500" fill="#1d7bd8" /></svg>
          <svg width="14" height="15" viewBox="0 0 14 15"><path fillRule="evenodd" d="M2 0h10a2 2 0 012 2v11a2 2 0 01-2 2H2a2 2 0 01-2-2V2a2 2 0 012-2zM2 5v8h10V5z" fill="#ececec" /></svg>
          <svg width="14" height="15" viewBox="0 0 14 15" fill="#ececec"><path d="M2 0h10a2 2 0 012 2v2H0V2a2 2 0 012-2zM0 6h14v3.200H0zM0 11h14v2a2 2 0 01-2 2H2a2 2 0 01-2-2z" /></svg>
          <PanelMenu>
            <svg width="12" height="16" viewBox="0 0 12 16" stroke="#ececec" strokeWidth="2" fill="none"><path d="M0 1.500h12M0 8h7M0 14.500h12M12 5.500H10v5h2" /></svg>
          </PanelMenu>
        </PanelTools>
        <PanelStatus>
          <Mic s={13} body="#8e9194" gap="#2d3033" slash="#d9483b" />
          <PanelDivider />
          <SpeakerLabel>正在讲话：</SpeakerLabel>
          <SpeakerName>nancy;</SpeakerName>
          <PanelLogo>
            <svg width="25" height="23" viewBox="0 0 25 23">
              <path d="M1 12.500L11.500 1.500q2-2 4 0l3 3.500L6 20.500q-1.500 1.500-3 0l-2-3.500q-1.500-2.500 0-4.500z" fill="#515356" />
              <path d="M13 14L25 2v20h-3q-2 0-4-2z" fill="#45474a" />
            </svg>
          </PanelLogo>
        </PanelStatus>
      </SpeakerPanel>

      <ChatBox>
        <Smile />
        <ChatDivider $l={6} $r={8} />
        <ChatText>说点什么...</ChatText>
        <ChatDivider $l={0} $r={11} />
        <svg width="7" height="11" viewBox="0 0 7 11"><path d="M6 .8L1.500 5.500 6 10.200" fill="none" stroke="#fff" strokeWidth="2" /></svg>
      </ChatBox>

      <SideHandle><Left /></SideHandle>
    </Window>
  );
}
